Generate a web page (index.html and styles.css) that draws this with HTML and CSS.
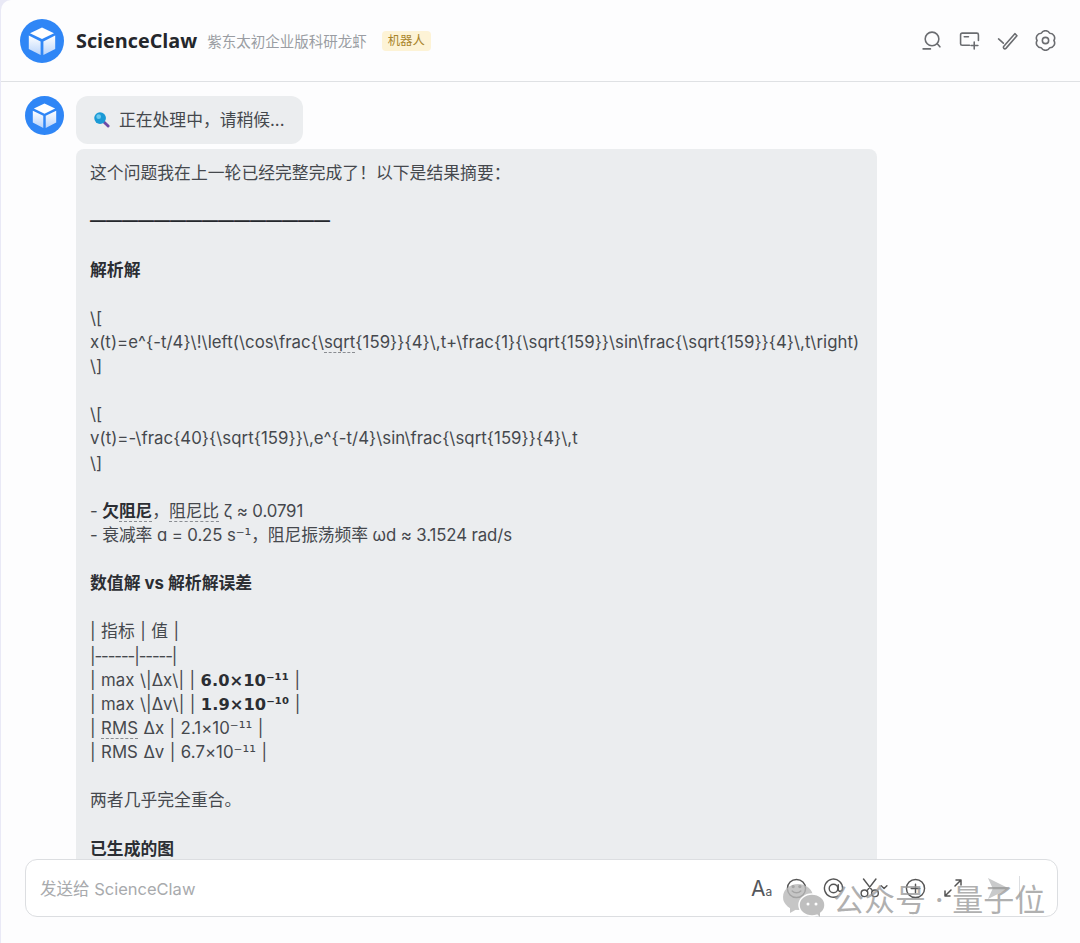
FILE: index.html
```html
<!DOCTYPE html>
<html lang="zh-CN">
<head>
<meta charset="utf-8">
<title>ScienceClaw</title>
<link rel="stylesheet" href="styles.css">
</head>
<body>
<svg class="defs" width="0" height="0" aria-hidden="true">
  <defs>
    <linearGradient id="cubeL" x1="0" y1="0" x2="0" y2="1"><stop offset="0" stop-color="#ffffff"/><stop offset="1" stop-color="#b9d4fb"/></linearGradient>
    <symbol id="logo" viewBox="0 0 44 44">
      <circle cx="22" cy="22" r="22" fill="#2f86f6"/>
      <path d="M22 8.500 34 14.200 22 20 10 14.200Z" fill="#fff"/>
      <path d="M8.800 16.600 20.600 22.400V36L8.800 30Z" fill="url(#cubeL)"/>
      <path d="M35.200 16.600 23.400 22.400V36L35.200 30Z" fill="url(#cubeL)"/>
    </symbol>
  </defs>
</svg>
<div class="window">
  <header class="topbar">
    <svg class="logo-lg"><use href="#logo"/></svg>
    <span class="brand">ScienceClaw</span>
    <span class="subtitle">紫东太初企业版科研龙虾</span>
    <span class="tag">机器人</span>
    <div class="top-actions">
      <svg class="ticon" viewBox="0 0 20 20"><circle cx="10.500" cy="8.500" r="6.500"/><path d="M15.500 13 18 16M2 18H9"/></svg>
      <svg class="ticon" viewBox="0 0 20 20"><path d="M10 14.500H3A1.500 1.500 0 0 1 1.500 13V4.500A1.500 1.500 0 0 1 3 3H17A1.500 1.500 0 0 1 18.500 4.500V10M5 6.500H9M14.500 11.500V18M11.500 14.800H18"/></svg>
      <svg class="ticon" viewBox="0 0 20 20"><path d="M1.500 8.500 6 12.500M6.500 15.500 17 3.500 19 5.500 8.500 17.500A1.400 1.400 0 0 1 6.500 15.500Z"/></svg>
      <svg class="ticon" viewBox="0 0 20 20"><path d="M18 10A4.500 4.500 0 0 1 14 16.900 4.500 4.500 0 0 1 6 16.900 4.500 4.500 0 0 1 2 10 4.500 4.500 0 0 1 6 3.100 4.500 4.500 0 0 1 14 3.100 4.500 4.500 0 0 1 18 10Z"/><circle cx="10" cy="10" r="3"/></svg>
    </div>
  </header>
  <main class="chat">
    <svg class="logo-sm"><use href="#logo"/></svg>
    <div class="bubbles">
      <div class="bubble status">
        <svg class="lens" viewBox="0 0 18 18"><path d="M11 11 16 16" stroke="#6b4aa5" stroke-width="3" stroke-linecap="round"/><circle cx="7.500" cy="7.500" r="6.200" fill="#1a9ad6"/><circle cx="6" cy="6" r="2.500" fill="#6cc9ee"/></svg>
        <span>正在处理中，请稍候...</span>
      </div>
      <div class="bubble answer">
        <p>这个问题我在上一轮已经完整完成了！以下是结果摘要：</p>
        <p class="rule">———————————————</p>
        <p><b>解析解</b></p>
        <p>\[<br>x(t)=e^{-t/4}\!\left(\cos\frac{\<span class="dot">sqrt</span>{159}}{4}\,t+\frac{1}{\sqrt{159}}\sin\frac{\sqrt{159}}{4}\,t\right)<br>\]</p>
        <p>\[<br>v(t)=-\frac{40}{\sqrt{159}}\,e^{-t/4}\sin\frac{\sqrt{159}}{4}\,t<br>\]</p>
        <p class="tight">- <b>欠<span class="dot">阻尼</span></b>，<span class="dot">阻尼比</span> ζ ≈ 0.0791<br>- 衰减率 ɑ = 0.25 s<span class="sup">⁻¹</span>，阻尼振荡频率 ωd ≈ 3.1524 rad/s</p>
        <p><b>数值解 vs 解析解误差</b></p>
        <p class="table">| 指标 | 值 |<br><span class="dash">|------|-----|</span><br>| max \|Δx\| | <b class="num">6.0×10⁻¹¹</b> |<br>| max \|Δv\| | <b class="num">1.9×10⁻¹⁰</b> |<br>| <span class="dot">RMS</span> Δx | 2.1×10<span class="sup">⁻¹¹</span> |<br>| RMS Δv | 6.7×10<span class="sup">⁻¹¹</span> |</p>
        <p>两者几乎完全重合。</p>
        <p><b>已生成的图</b></p>
      </div>
    </div>
  </main>
  <footer class="composer-wrap">
    <div class="composer">
      <span class="placeholder">发送给 ScienceClaw</span>
      <div class="tools">
        <span class="aa">A<small>a</small></span>
        <svg class="cicon" viewBox="0 0 22 22"><circle cx="11" cy="11" r="9.500"/><circle cx="7.500" cy="9" r="1" fill="#555"/><circle cx="14.500" cy="9" r="1" fill="#555"/><path d="M6.500 13.500C9 16 13 16 15.500 13.500"/></svg>
        <svg class="cicon" viewBox="0 0 22 22"><path d="M15.500 19A9.500 9.500 0 1 1 20.500 11C20.500 14.500 16 15 16 12V7M15.500 11A4.500 4.500 0 1 1 6.500 11 4.500 4.500 0 0 1 15.500 11Z"/></svg>
        <svg class="cicon scissors" viewBox="0 0 30 22"><circle cx="4.500" cy="16" r="3.500"/><circle cx="15.500" cy="16" r="3.500"/><path d="M7 13.500 16.500 1M13 13.500 3.500 1M22 8 25 11 28 8"/></svg>
        <svg class="cicon" viewBox="0 0 22 22"><circle cx="11" cy="11" r="9.500"/><path d="M11 6.500V15.500M6.500 11H15.500"/></svg>
        <svg class="cicon expand" viewBox="0 0 18 18"><path d="M1 17 7 11M1 12V17H6M17 1 11 7M12 1H17V6"/></svg>
        <svg class="send" viewBox="0 0 24 24"><path d="M1 1 23 12 1 23 6 12Z" fill="#c9cacb"/></svg>
        <span class="sep"></span>
      </div>
    </div>
  </footer>
  <div class="watermark">
    <svg class="wechat" viewBox="0 0 42 34"><ellipse cx="15" cy="14" rx="15" ry="13" fill="#b9b9b9"/><path d="M7 23 7 30 14 26Z" fill="#b9b9b9"/><ellipse cx="29" cy="22" rx="13" ry="11" fill="#b0b0b0" stroke="#fff" stroke-width="1.500"/><path d="M34 31 37 34 37 28Z" fill="#b0b0b0"/><circle cx="25" cy="21" r="1.500" fill="#fff"/><circle cx="33" cy="21" r="1.500" fill="#fff"/></svg>
    <span>公众号 · 量子位</span>
  </div>
</div>
</body>
</html>
```
FILE: styles.css
```css
* { box-sizing: border-box; }
html, body { margin: 0; height: 100%; }
body {
  background: #e9e9f6;
  font-family: Inter, "Noto Sans CJK SC", sans-serif;
  color: #45484d;
  overflow: hidden;
}
.defs { position: absolute; }
.window {
  position: relative;
  height: 943px;
  margin-left: 1px;
  background: #fdfdfe;
  border-radius: 10px 0 0 10px;
  display: flex;
  flex-direction: column;
}
.topbar {
  flex: none;
  height: 82px;
  display: flex;
  align-items: center;
  padding: 0 24px 0 19px;
  border-bottom: 1px solid #dfe1e4;
}
.logo-lg { width: 44px; height: 44px; margin-right: 12px; flex: none; }
.brand { font-family: "Open Sans", sans-serif; font-size: 19.800px; font-weight: 700; color: #24272c; margin-right: 10px; }
.subtitle { font-size: 14.500px; color: #9a9da3; margin-right: 15px; }
.tag {
  font-size: 12.400px;
  line-height: 20px;
  padding: 0 6px;
  border-radius: 4px;
  background: #fdf3d6;
  color: #a9852c;
}
.top-actions { margin-left: auto; display: flex; gap: 17px; }
.ticon { width: 21px; height: 21px; fill: none; stroke: #6a6c70; stroke-width: 1.500; stroke-linecap: round; stroke-linejoin: round; }
.chat {
  flex: 1;
  min-height: 0;
  overflow: hidden;
  display: flex;
  align-items: flex-start;
  gap: 12px;
  padding: 14px 0 0 24px;
}
.logo-sm { width: 39px; height: 39px; flex: none; }
.bubbles { display: flex; flex-direction: column; align-items: flex-start; gap: 5px; }
.bubble { background: #ebedef; border-radius: 12px; }
.status {
  height: 48px;
  padding: 0 18px 2px 17px;
  display: flex;
  align-items: center;
  gap: 9px;
  font-size: 16.800px;
}
.lens { width: 17px; height: 17px; }
.answer {
  width: 801px;
  padding: 12px 14px 20px;
  font-size: 16.800px;
  line-height: 24.130px;
  letter-spacing: .04px;
  border-radius: 8px 8px 0 0;
}
.answer p { margin: 0 0 24.130px; }
.answer b { color: #2b2e33; }
.answer .rule { font-family: "Liberation Sans", sans-serif; font-size: 16px; font-weight: 700; color: #24272c; white-space: nowrap; letter-spacing: 0; }
.answer .tight { letter-spacing: -.1px; }
.answer .table { word-spacing: .7px; }
.answer .num { font-family: "DejaVu Sans", sans-serif; font-size: 16.300px; line-height: 0; word-spacing: 0; }
.sup { font-family: "DejaVu Sans", sans-serif; line-height: 0; }
.answer .table .dash { letter-spacing: -1.100px; }
.dot { border-bottom: 1px dashed #8a8d92; }
.composer-wrap { flex: none; height: 84px; padding: 0 22px 0 24px; background: #fdfdfe; }
.composer {
  height: 58px;
  background: #fff;
  border: 1px solid #dcdee1;
  border-radius: 12px;
  display: flex;
  align-items: center;
  padding: 0 37px 0 14px;
}
.placeholder { font-size: 16.500px; color: #a8aaad; }
.tools { margin-left: auto; display: flex; align-items: center; gap: 16px; height: 24px; }
.aa { font-size: 21px; color: #54575c; width: 21px; white-space: nowrap; margin-right: -2px; }
.aa small { font-size: 12px; }
.cicon { width: 21px; height: 21px; fill: none; stroke: #555; stroke-width: 1.500; stroke-linecap: round; stroke-linejoin: round; }
.scissors { width: 29px; }
.expand { width: 18px; height: 18px; margin-left: 2px; }
.send { width: 23px; height: 23px; margin-left: 9px; }
.sep { width: 1px; height: 24px; background: #dcdee1; margin-left: -7px; }
.watermark {
  position: absolute;
  left: 782px;
  top: 881px;
  display: flex;
  align-items: center;
  gap: 8px;
  font-size: 31px;
  line-height: 38px;
  color: rgba(150, 150, 150, .75);
  white-space: nowrap;
}
.wechat { width: 42px; height: 34px; opacity: .8; }
```
